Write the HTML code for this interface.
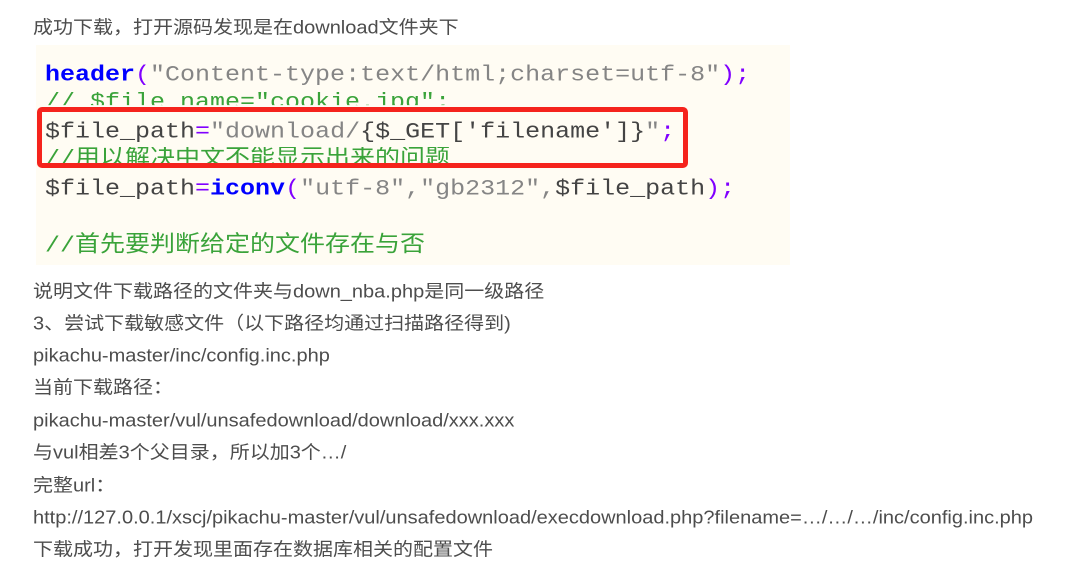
<!DOCTYPE html>
<html><head><meta charset="utf-8"><style>
body{margin:0;width:1086px;height:580px;background:#fff;overflow:hidden;position:relative;font-family:"Liberation Sans","Noto Sans CJK SC",sans-serif;color:#4d4d4d;font-size:20px}
.t{position:absolute;left:33px;white-space:nowrap;line-height:22px;transform:scaleY(0.92);transform-origin:left top}
.code{position:absolute;left:36px;top:45px;width:754px;height:220px;background:#fffcf3}
.l{position:absolute;left:9px;font-family:"Liberation Mono","Noto Sans CJK SC",monospace;font-size:25px;white-space:nowrap;line-height:28px;color:#858585;transform:scaleY(0.9);transform-origin:left center}
.k{color:#0000ff;font-weight:bold}.p{color:#8000ff}.v{color:#444}.c{color:#3aa33a}
.box{position:absolute;left:37px;top:107px;width:641px;height:51px;border:5px solid #f5231c;border-radius:5px}
</style></head><body>
<div class="t" style="top:18px">成功下载，打开源码发现是在download文件夹下</div>
<div class="code">
<div class="l" style="top:16px"><span class="k">header</span><span class="p">(</span>"Content-type:text/html;charset=utf-8"<span class="p">);</span></div>
<div class="l c" style="top:44px;height:17px;overflow:hidden">// $file_name="cookie.jpg";</div>
<div class="l" style="top:73px"><span class="v">$file_path</span><span class="p">=</span>"download/<span class="v">{$_GET['filename']}</span>"<span class="p">;</span></div>
<div class="l c" style="top:101px;height:20px;overflow:hidden">//用以解决中文不能显示出来的问题</div>
<div class="l" style="top:130px"><span class="v">$file_path</span><span class="p">=</span><span class="k">iconv</span><span class="p">(</span>"utf-8","gb2312",<span class="v">$file_path</span><span class="p">);</span></div>
<div class="l c" style="top:187px">//首先要判断给定的文件存在与否</div>
</div>
<div class="box"></div>
<div class="t" style="top:282px">说明文件下载路径的文件夹与down_nba.php是同一级路径</div>
<div class="t" style="top:314px">3、尝试下载敏感文件（以下路径均通过扫描路径得到)</div>
<div class="t" style="top:346px">pikachu-master/inc/config.inc.php</div>
<div class="t" style="top:378px">当前下载路径：</div>
<div class="t" style="top:411px">pikachu-master/vul/unsafedownload/download/xxx.xxx</div>
<div class="t" style="top:443px">与vul相差3个父目录，所以加3个…/</div>
<div class="t" style="top:476px">完整url：</div>
<div class="t" style="top:508px">http://127.0.0.1/xscj/pikachu-master/vul/unsafedownload/execdownload.php?filename=…/…/…/inc/config.inc.php</div>
<div class="t" style="top:540px">下载成功，打开发现里面存在数据库相关的配置文件</div>
</body></html>
